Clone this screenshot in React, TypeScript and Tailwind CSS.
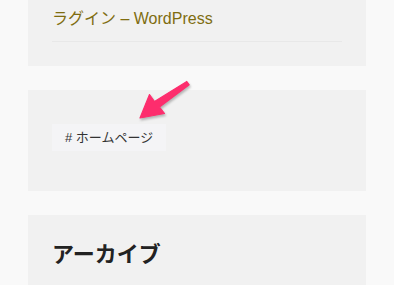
const FONT = "font-['Liberation_Sans','Noto_Sans_CJK_JP',sans-serif]";

function Arrow() {
  return (
    <svg
      className="absolute left-0 top-0 pointer-events-none drop-shadow-[1px_2px_1px_rgba(0,0,0,0.25)]"
      width="394"
      height="285"
      viewBox="0 0 394 285"
    >
      <path
        d="M140 118 L149.5 94.5 L154.5 101.5 L186.8 81.5 L189.2 84.8 L159.5 107 L164.5 113.5 Z"
        fill="#fd2d6d"
        stroke="#fd2d6d"
        strokeWidth="1.2"
        strokeLinejoin="round"
      />
    </svg>
  );
}

export default function App() {
  return (
    <div className={`relative h-[285px] overflow-hidden bg-[#f9f9f9] px-[28px] ${FONT}`}>
      {/* Recent posts widget (tail end) */}
      <div className="-mt-[23px] bg-[#f1f1f1] px-6 pb-6">
        <div className="border-b border-[#e8e8e8] pb-[8px]">
          <a className="block text-[16px] leading-[28px] text-[#7f6d10]">
            WordPress のおすすめプ
            <br />
            ラグイン – WordPress
          </a>
        </div>
      </div>

      {/* Tag cloud widget */}
      <div className="mt-[24px] h-[101px] bg-[#f1f1f1] px-6 pt-[34px]">
        <span className="inline-flex h-[27px] w-[114px] items-center bg-[#f4f4f6] pl-[13px] text-[13px] text-[#333]">
          # ホームページ
        </span>
      </div>

      {/* Archive widget */}
      <div className="mt-[24px] h-[100px] bg-[#f1f1f1] px-6 pt-[23px]">
        <h2 className="text-[22px] font-bold leading-[33px] text-[#222]">アーカイブ</h2>
      </div>

      <Arrow />
    </div>
  );
}
